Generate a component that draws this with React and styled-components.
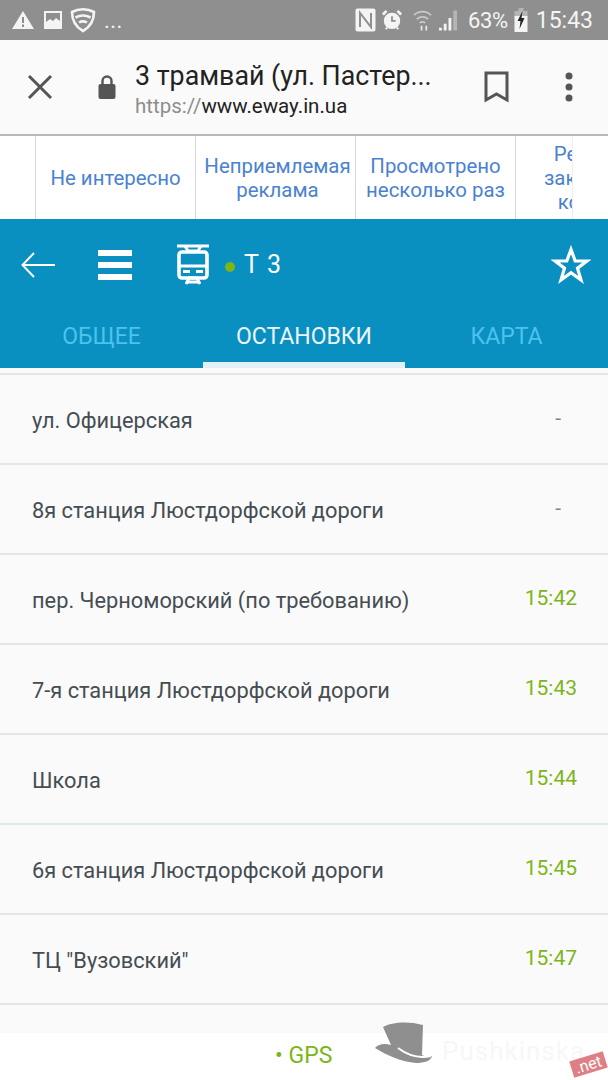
import React from 'react';
import styled, { createGlobalStyle } from 'styled-components';

const GlobalStyle = createGlobalStyle`
  html, body {
    margin: 0;
    padding: 0;
    background: #fafafb;
    font-family: Roboto, "Liberation Sans", sans-serif;
  }
`;

const Page = styled.div`
  width: 608px;
  height: 1080px;
  overflow: hidden;
  position: relative;
  display: flex;
  flex-direction: column;
`;

const StatusBar = styled.div`
  height: 40px;
  background: #8f8f8f;
  display: flex;
  align-items: center;
  justify-content: space-between;
  padding: 0 15px 0 11px;
  color: #f4f4f4;
  flex: none;
`;

const StatusGroup = styled.div`
  display: flex;
  align-items: center;
`;

const Slot = styled.span`
  display: flex;
  align-items: center;
  margin-left: ${(p) => p.$left || 0}px;
`;

const Dots = styled.span`
  font-size: 22px;
  letter-spacing: 0.5px;
`;

const Percent = styled.span`
  font-size: 22px;
  letter-spacing: -0.4px;
`;

const Clock = styled.span`
  font-size: 23px;
`;

const BrowserBar = styled.div`
  height: 94px;
  background: #fafafa;
  border-bottom: 2px solid #b9b9b9;
  display: flex;
  align-items: center;
  flex: none;
  padding-left: 27px;
`;

const PageInfo = styled.div`
  width: 334px;
  margin-left: 18px;
  padding-top: 5px;
`;

const PageTitle = styled.div`
  font-size: 26.8px;
  line-height: 32px;
  color: #222;
`;

const PageUrl = styled.div`
  font-size: 20.5px;
  line-height: 28px;
  color: #222;
  span {
    color: #8d8d8d;
  }
`;

const BarAction = styled.div`
  display: flex;
  margin-left: ${(p) => p.$left}px;
`;

const AdStrip = styled.div`
  height: 83px;
  background: #fff;
  display: flex;
  flex: none;
  padding-left: 35px;
  position: relative;
  overflow: hidden;
`;

const AdCell = styled.div`
  width: 160px;
  box-sizing: border-box;
  flex: none;
  border-left: 1px solid #d8d8d8;
  padding-left: ${(p) => p.$nudge || 0}px;
  display: flex;
  align-items: center;
  justify-content: center;
  text-align: center;
  font-size: 20.4px;
  line-height: 24px;
  color: #4a82d0;
`;

const AdFade = styled.div`
  position: absolute;
  top: 0;
  bottom: 0;
  right: 0;
  width: 35px;
  background: #fff;
  box-shadow: -1px 0 0 #eee;
`;

const Header = styled.div`
  height: 149px;
  background: #0a8fc1;
  flex: none;
  display: flex;
  flex-direction: column;
`;

const TopRow = styled.div`
  height: 94px;
  box-sizing: border-box;
  padding: 0 17px 3px 21px;
  display: flex;
  align-items: center;
  color: #fff;
`;

const Burger = styled.div`
  width: 34px;
  margin-left: 43px;
  display: flex;
  flex-direction: column;
  gap: 6px;
  i {
    display: block;
    height: 6px;
    background: #fff;
  }
`;

const TramWrap = styled.div`
  margin-left: 45px;
  display: flex;
`;

const LineDot = styled.span`
  width: 10px;
  height: 10px;
  border-radius: 50%;
  background: #7cb518;
  margin: 4px 0 0 16px;
`;

const LineName = styled.span`
  font-size: 25px;
  margin-left: 9px;
  letter-spacing: 1.2px;
`;

const Star = styled.div`
  margin-left: auto;
  display: flex;
`;

const Tabs = styled.div`
  display: flex;
  height: 55px;
`;

const Tab = styled.div`
  width: ${(p) => p.$w}px;
  display: flex;
  align-items: center;
  justify-content: center;
  font-size: 23px;
  padding-bottom: 2px;
  box-sizing: border-box;
  color: ${(p) => (p.$active ? '#eaf6fb' : '#4cc3ee')};
  border-bottom: 6px solid ${(p) => (p.$active ? '#e2f1f6' : 'transparent')};
`;

const StopList = styled.div`
  flex: 1;
  background: #fafafb;
  padding-top: 5px;
`;

const StopRow = styled.div`
  height: 90px;
  box-sizing: border-box;
  border-top: 2px solid #dfe7ea;
  padding: 2px 31px 0 32px;
  display: flex;
  align-items: center;
  justify-content: space-between;
  font-size: 21.8px;
  color: #454d52;
`;

const StopTime = styled.span`
  color: ${(p) => (p.$live ? '#7cb518' : '#80878b')};
  font-size: 21px;
  padding-bottom: 4px;
  margin-right: ${(p) => (p.$live ? 0 : 16)}px;
`;

const Footer = styled.div`
  position: absolute;
  left: 0;
  right: 0;
  bottom: 0;
  height: 47px;
  background: #fff;
`;

const Gps = styled.div`
  position: absolute;
  left: 275px;
  top: 9px;
  font-size: 23px;
  color: #7cb518;
`;

const Hat = styled.div`
  position: absolute;
  left: 374px;
  top: -12px;
  display: flex;
`;

const Brand = styled.div`
  position: absolute;
  left: 442px;
  top: 3px;
  font-size: 26px;
  letter-spacing: 1px;
  color: #f7f7f7;
`;

const NetTag = styled.div`
  position: absolute;
  left: 571px;
  top: 23px;
  padding: 0 4px;
  font-size: 16px;
  line-height: 17px;
  background: #de7f85;
  color: #fff;
  transform: rotate(-17deg);
`;

const stops = [
  ['ул. Офицерская', '-'],
  ['8я станция Люстдорфской дороги', '-'],
  ['пер. Черноморский (по требованию)', '15:42'],
  ['7-я станция Люстдорфской дороги', '15:43'],
  ['Школа', '15:44'],
  ['6я станция Люстдорфской дороги', '15:45'],
  ['ТЦ "Вузовский"', '15:47'],
  ['', ''],
];

const Warning = () => (
  <svg width="24" height="20" viewBox="0 0 24 20">
    <path fill="#f4f4f4" fillRule="evenodd" d="M12 1 23 19H1zM11 7v6h2V7zm0 7.500V17h2v-2.500z" />
  </svg>
);

const Picture = () => (
  <svg width="20" height="20" viewBox="0 0 20 20">
    <path fill="#f4f4f4" fillRule="evenodd" d="M1 1h18v18H1zM3 3v9l4-3 3 2 3-3 4 3V3z" />
  </svg>
);

const Shield = () => (
  <svg width="26" height="26" viewBox="0 0 26 26" fill="none" stroke="#f4f4f4" strokeWidth="2.600">
    <path d="M2 5c6.500-3.600 15.500-3.600 22 0 0 8-4 15-11 19C6 20 2 13 2 5z" />
    <path d="M5.500 10.500c4.500-2.400 10.500-2.400 15 0M9 15.500c2.400-1.400 5.600-1.400 8 0" />
  </svg>
);

const NfcIcon = () => (
  <svg width="21" height="24" viewBox="0 0 21 24">
    <rect x="0.500" y="0.500" width="20" height="23" rx="2" fill="#f4f4f4" />
    <path d="M5 19V5l11 14V5" fill="none" stroke="#8f8f8f" strokeWidth="2" />
  </svg>
);

const AlarmIcon = () => (
  <svg width="20" height="24" viewBox="0 0 22 24">
    <circle cx="11" cy="13" r="9" fill="#f4f4f4" />
    <path d="M11 8v5h4" fill="none" stroke="#8f8f8f" strokeWidth="2" />
    <path d="M1 6l4-4M21 6l-4-4" stroke="#f4f4f4" strokeWidth="3" />
    <path d="M4 22l2-2M18 22l-2-2" stroke="#f4f4f4" strokeWidth="2" />
  </svg>
);

const WifiIcon = () => (
  <svg width="19" height="24" viewBox="0 0 20 24" fill="none" stroke="#c9c9c9" strokeWidth="1.800">
    <path d="M1 7c5-5 13-5 18 0M4 11c3.500-3 8.500-3 12 0M7 15c2-1.500 4-1.500 6 0" />
    <path d="M9 23v-5M14 23v-5" stroke="#e8e8e8" />
  </svg>
);

const SignalIcon = () => (
  <svg width="21" height="22" viewBox="0 0 22 22">
    <path fill="#f4f4f4" d="M1 22h3v-3H1zM6 22h3v-7H6zM11 22h3V9h-3z" />
    <path fill="#b5b5b5" d="M16 22h4V1h-4z" />
  </svg>
);

const BatteryIcon = () => (
  <svg width="14" height="24" viewBox="0 0 13 24">
    <path fill="#b5b5b5" d="M4 0h5v3h4v6H0V3h4z" />
    <path fill="#f4f4f4" d="M0 8h13v16H0z" />
    <path fill="#222" d="M8 3 3 13h3l-1 8 5-11H7z" />
  </svg>
);

const CloseIcon = () => (
  <svg width="26" height="26" viewBox="0 0 26 26">
    <path d="M2 2l22 22M24 2 2 24" stroke="#555" strokeWidth="3" />
  </svg>
);

const LockIcon = () => (
  <svg width="20" height="26" viewBox="0 0 20 26">
    <path d="M5.500 11V7a4.500 4.500 0 0 1 9 0v4" fill="none" stroke="#555" strokeWidth="2.400" />
    <rect x="1.500" y="10" width="17" height="15" rx="2" fill="#555" />
  </svg>
);

const BookmarkIcon = () => (
  <svg width="26" height="32" viewBox="0 0 26 32">
    <path d="M2 2h21v27l-10.500-6L2 29z" fill="none" stroke="#555" strokeWidth="3" />
  </svg>
);

const MoreIcon = () => (
  <svg width="8" height="30" viewBox="0 0 8 30">
    <circle cx="4" cy="4" r="3.500" fill="#555" />
    <circle cx="4" cy="15" r="3.500" fill="#555" />
    <circle cx="4" cy="26" r="3.500" fill="#555" />
  </svg>
);

const BackArrow = () => (
  <svg width="34" height="26" viewBox="0 0 34 26" fill="none" stroke="#fff" strokeWidth="2">
    <path d="M34 13H2M13 1 1.500 13 13 25" />
  </svg>
);

const TramIcon = () => (
  <svg width="32" height="41" viewBox="0 0 32 41" fill="none" stroke="#fff">
    <path d="M0 2h32M8 2l3 5h10l3-5" strokeWidth="3" />
    <rect x="2" y="8" width="28" height="26" rx="3" strokeWidth="3.600" />
    <path d="M2 22h28" strokeWidth="3" />
    <path d="M6 27.500h7M19 27.500h7" strokeWidth="3" />
    <path d="M9 40l3-6h8l3 6M10 38h12" strokeWidth="2.800" />
  </svg>
);

const StarIcon = () => (
  <svg width="40" height="40" viewBox="0 0 40 40">
    <path d="M20 4.500 24.200 16H36l-9.500 7.200L30 35l-10-7.200L10 35l3.500-11.800L4 16h11.800z" fill="none" stroke="#fff" strokeWidth="3.200" />
  </svg>
);

const HatIcon = () => (
  <svg width="60" height="46" viewBox="0 0 60 46">
    <path fill="#8f8f8f" d="M9 6C18 1 34 0 49 4L48 34C51 36 55 36 58 35 57 40 50 42 42 42 28 41 12 34 1 27 4 23 11 22 17 24z" />
    <path fill="none" stroke="#fff" strokeWidth="2" d="M24 27C32 33 44 38 57 35" />
  </svg>
);

export default function App() {
  return (
    <Page>
      <GlobalStyle />
      <StatusBar>
        <StatusGroup>
          <Warning />
          <Slot $left={8}>
            <Picture />
          </Slot>
          <Slot $left={7}>
            <Shield />
          </Slot>
          <Slot $left={8}>
            <Dots>...</Dots>
          </Slot>
        </StatusGroup>
        <StatusGroup>
          <NfcIcon />
          <Slot $left={6}>
            <AlarmIcon />
          </Slot>
          <Slot $left={11}>
            <WifiIcon />
          </Slot>
          <Slot $left={6}>
            <SignalIcon />
          </Slot>
          <Slot $left={9}>
            <Percent>63%</Percent>
          </Slot>
          <Slot $left={6}>
            <BatteryIcon />
          </Slot>
          <Slot $left={8}>
            <Clock>15:43</Clock>
          </Slot>
        </StatusGroup>
      </StatusBar>
      <BrowserBar>
        <CloseIcon />
        <BarAction $left={44}>
          <LockIcon />
        </BarAction>
        <PageInfo>
          <PageTitle>3 трамвай (ул. Пастер...</PageTitle>
          <PageUrl>
            <span>https://</span>www.eway.in.ua
          </PageUrl>
        </PageInfo>
        <BarAction $left={15}>
          <BookmarkIcon />
        </BarAction>
        <BarAction $left={55}>
          <MoreIcon />
        </BarAction>
      </BrowserBar>
      <AdStrip>
        <AdCell>Не интересно</AdCell>
        <AdCell $nudge={4}>
          Неприемлемая
          <br />
          реклама
        </AdCell>
        <AdCell>
          Просмотрено
          <br />
          несколько раз
        </AdCell>
        <AdCell>
          Реклама
          <br />
          закрывает
          <br />
          контент
        </AdCell>
        <AdFade />
      </AdStrip>
      <Header>
        <TopRow>
          <BackArrow />
          <Burger>
            <i />
            <i />
            <i />
          </Burger>
          <TramWrap>
            <TramIcon />
          </TramWrap>
          <LineDot />
          <LineName>Т 3</LineName>
          <Star>
            <StarIcon />
          </Star>
        </TopRow>
        <Tabs>
          <Tab $w={203}>ОБЩЕЕ</Tab>
          <Tab $w={202} $active>
            ОСТАНОВКИ
          </Tab>
          <Tab $w={203}>КАРТА</Tab>
        </Tabs>
      </Header>
      <StopList>
        {stops.map(([name, time], i) => (
          <StopRow key={i}>
            <span>{name}</span>
            <StopTime $live={time !== '-'}>{time}</StopTime>
          </StopRow>
        ))}
      </StopList>
      <Footer>
        <Gps>• GPS</Gps>
        <Hat>
          <HatIcon />
        </Hat>
        <Brand>Pushkinska</Brand>
        <NetTag>.net</NetTag>
      </Footer>
    </Page>
  );
}
